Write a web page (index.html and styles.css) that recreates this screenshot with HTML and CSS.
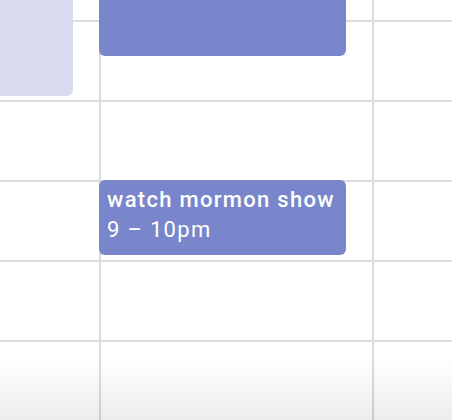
FILE: index.html
```html
<!DOCTYPE html>
<html lang="en">

<head>
    <meta charset="UTF-8">
    <meta name="viewport" content="width=device-width, initial-scale=1.0">
    <title>Calendar</title>
    <link rel="stylesheet" href="styles.css">
</head>

<body>
    <div class="board">
        <div class="grid">
            <div class="cell"></div><div class="cell"></div><div class="cell"></div>
            <div class="cell"></div><div class="cell"></div><div class="cell"></div>
            <div class="cell"></div><div class="cell"></div><div class="cell"></div>
            <div class="cell"></div><div class="cell"></div><div class="cell"></div>
            <div class="cell"></div><div class="cell"></div><div class="cell"></div>
            <div class="cell"></div><div class="cell"></div><div class="cell"></div>
        </div>

        <!-- events lie over the grid -->
        <div class="event event-past"></div>
        <div class="event event-top"></div>
        <div class="event event-show">
            <div class="event-title">watch mormon show</div>
            <div class="event-time">9 – 10pm</div>
        </div>

        <div class="fade"></div>
    </div>
</body>

</html>
```

FILE: styles.css
```css
html, body {
    height: 100%;
    margin: 0;
    padding: 0;
}

body {
    background: #fff;
    font-family: Roboto, "Liberation Sans", sans-serif;
    overflow: hidden;
}

.board {
    position: relative;
    height: 420px;
    overflow: hidden;
}

.grid {
    display: grid;
    grid-template-columns: 101px 273px 1fr;
    grid-auto-rows: 80px;
    margin-top: -58px;
}

.cell {
    border-bottom: 2px solid #dadce0;
    border-right: 2px solid #dadce0;
}

.cell:nth-child(3n) {
    border-right: none;
}

.event {
    position: absolute;
    border-radius: 6px;
    box-sizing: border-box;
    color: #fff;
}

.event-past {
    left: -10px;
    top: -10px;
    width: 83px;
    height: 106px;
    background: #d8dbef;
}

.event-top {
    left: 99px;
    top: -10px;
    width: 247px;
    height: 66px;
    background: #7986cb;
}

.event-show {
    left: 99px;
    top: 180px;
    width: 247px;
    height: 75px;
    padding: 5px 8px;
    background: #7986cb;
    font-size: 22px;
    line-height: 30px;
    letter-spacing: 1.3px;
    white-space: nowrap;
}

.event-title {
    font-weight: 500;
}

.event-time {
    font-weight: 400;
}

.fade {
    position: absolute;
    left: 0;
    right: 0;
    bottom: 0;
    height: 62px;
    background: linear-gradient(rgba(0, 0, 0, 0), rgba(0, 0, 0, 0.075));
    pointer-events: none;
}
```
